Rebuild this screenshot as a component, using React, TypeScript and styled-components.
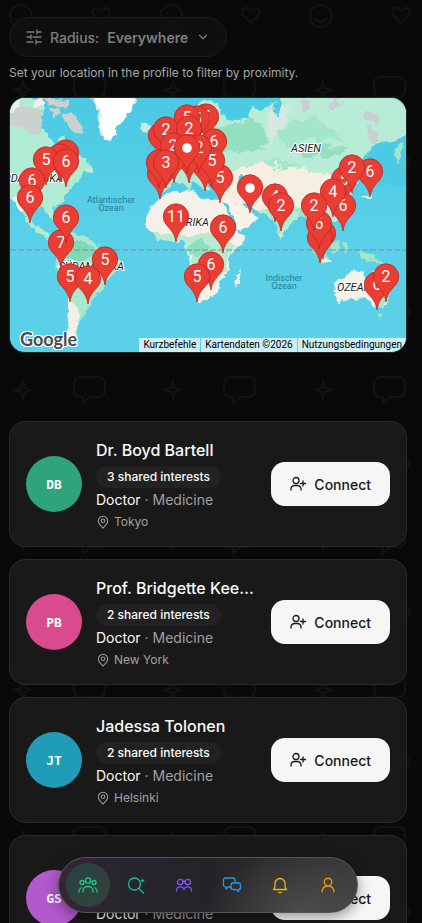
import React from 'react';
import styled, { createGlobalStyle } from 'styled-components';
import { ChevronDown, MapPin, UserRound } from 'lucide-react';

const GlobalStyle = createGlobalStyle`
  * { box-sizing: border-box; }
  body { margin: 0; background: #090909; }
  button { font: inherit; cursor: pointer; }
`;

const Page = styled.div`
  position: relative;
  height: 100vh;
  overflow: hidden;
  background: #090909;
  color: #fafafa;
  font-family: Inter, 'Liberation Sans', sans-serif;
`;

const Backdrop = styled.svg`
  position: absolute;
  inset: 0;
  width: 100%;
  height: 100%;
`;

const Content = styled.main`
  position: relative;
  padding: 17px 15px 0 9px;
`;

const RadiusButton = styled.button`
  display: flex;
  align-items: center;
  gap: 8px;
  height: 40px;
  padding: 0 16px;
  border: 1px solid #1c1c1c;
  border-radius: 20px;
  background: rgba(17, 17, 17, 0.8);
  color: #7f7f7f;
  font-size: 14px;
  font-weight: 500;
`;

const RadiusValue = styled.span`
  font-weight: 600;
`;

const Hint = styled.p`
  margin: 8px 0 16px;
  font-size: 12px;
  line-height: 16px;
  color: #a6a6a6;
`;

const MapFrame = styled.section`
  position: relative;
  overflow: hidden;
  aspect-ratio: 398 / 256;
  border: 1px solid #262626;
  border-radius: 16px;
  background: #5ad1e8;
`;

const MapDrawing = styled.svg`
  display: block;
  width: 100%;
  height: 100%;
`;

const MapLogo = styled.a`
  position: absolute;
  left: 10px;
  bottom: 1px;
  color: #4a4d50;
  font-family: Lato, sans-serif;
  font-size: 18px;
  line-height: 24px;
  font-weight: 700;
  text-decoration: none;
  text-shadow: 1px 0 #fff, -1px 0 #fff, 0 1px #fff, 0 -1px #fff, 1px 1px #fff, -1px -1px #fff, 1px -1px #fff, -1px 1px #fff;
`;

const MapLegal = styled.div`
  position: absolute;
  right: 0;
  bottom: 0;
  display: flex;
  gap: 1px;
  font-family: Roboto, sans-serif;
  font-size: 10px;
  line-height: 14px;
`;

const LegalLink = styled.a`
  padding: 0 4px;
  background: rgba(235, 245, 248, 0.8);
  color: #000;
  text-decoration: none;
`;

const People = styled.ul`
  display: flex;
  flex-direction: column;
  gap: 12px;
  margin: 68px 0 0;
  padding: 0;
  list-style: none;
`;

const Card = styled.li`
  display: flex;
  align-items: center;
  gap: 14px;
  padding: 16px;
  border: 1px solid #2a2a2a;
  border-radius: 16px;
  background: #191919;
`;

const Avatar = styled.div<{ $color: string }>`
  display: grid;
  place-items: center;
  flex: none;
  width: 56px;
  height: 56px;
  border-radius: 50%;
  background: ${(p) => p.$color};
  font-family: 'DejaVu Sans Mono', monospace;
  font-size: 13px;
  font-weight: 700;
`;

const Details = styled.div`
  display: flex;
  flex: 1;
  flex-direction: column;
  align-items: flex-start;
  min-width: 0;
`;

const Name = styled.h2`
  max-width: 100%;
  margin: 0 0 4px;
  overflow: hidden;
  font-size: 16px;
  line-height: 24px;
  font-weight: 500;
  text-overflow: ellipsis;
  white-space: nowrap;
`;

const Shared = styled.span`
  padding: 0 11px;
  border-radius: 11px;
  background: #222222;
  font-size: 12px;
  line-height: 22px;
  font-weight: 500;
`;

const Job = styled.p`
  margin: 2px 0 4px;
  color: #a1a1a1;
  font-size: 14px;
  line-height: 20px;
`;

const Role = styled.span`
  color: #fafafa;
`;

const Place = styled.p`
  display: flex;
  align-items: center;
  gap: 4px;
  margin: 0;
  color: #a1a1a1;
  font-size: 12px;
  line-height: 16px;
`;

const ConnectButton = styled.button`
  display: flex;
  align-items: center;
  gap: 8px;
  flex: none;
  height: 44px;
  padding: 0 19px;
  border: 0;
  border-radius: 14px;
  background: #f6f6f6;
  color: #171717;
  font-size: 14px;
  font-weight: 500;
`;

const NavDock = styled.div`
  position: fixed;
  right: 6px;
  bottom: 10px;
  left: 0;
  display: flex;
  justify-content: center;
`;

const NavBar = styled.nav`
  display: flex;
  gap: 4px;
  padding: 5px 7px;
  border: 1px solid #555558;
  border-radius: 28px;
  background:
    radial-gradient(ellipse 100px 60px at 82% 100%, rgba(100, 100, 102, 0.5), transparent),
    linear-gradient(90deg, #342637 0%, #29252d 20%, #242428 50%, #303033 75%, #3a3a3c 100%);
  box-shadow: 0 4px 14px rgba(0, 0, 0, 0.4);
`;

const NavButton = styled.button<{ $tone: string; $active?: boolean }>`
  display: grid;
  place-items: center;
  width: 44px;
  height: 44px;
  padding: 0;
  border: 0;
  border-radius: 50%;
  background: ${(p) => (p.$active ? 'linear-gradient(115deg, #28443e, #35403f)' : 'transparent')};
  color: ${(p) => p.$tone};
`;

const Stroke = styled.svg`
  display: block;
  fill: none;
  stroke: currentColor;
  stroke-width: 1.3;
  stroke-linecap: round;
  stroke-linejoin: round;
`;

const MapLabel = styled.text`
  fill: #1c1c1c;
  stroke: #fff;
  stroke-width: 2px;
  paint-order: stroke;
  font: italic 400 11px Roboto, sans-serif;
`;

const OceanLabel = styled.text`
  fill: #238097;
  font: 400 9px Roboto, sans-serif;
  text-anchor: middle;
`;

const PinLabel = styled.text`
  fill: #fff;
  font: 400 16px Roboto, sans-serif;
  text-anchor: middle;
`;

type PinData = [x: number, y: number, label: string];

const pins: PinData[] = [
  [66, 153, ''], [60, 157, ''], [46, 160, '5'], [66, 162, '6'], [32, 181, '6'], [30, 198, '6'],
  [61, 243, '7'], [66, 218, '6'], [105, 260, '5'], [70, 277, '5'], [88, 279, '4'],
  [206, 117, '5'], [197, 119, '5'], [187, 118, '5'], [161, 136, ''], [166, 130, '2'], [189, 129, '2'],
  [220, 178, '5'], [214, 142, '6'], [205, 166, ''], [212, 161, '5'], [189, 158, ''], [199, 148, '2'],
  [174, 158, ''], [173, 146, '2'], [160, 174, ''], [159, 163, ''], [166, 163, '3'], [187, 148, 'dot'],
  [176, 217, '11'], [223, 228, '6'], [211, 265, '6'], [197, 277, '5'],
  [250, 188, 'dot'], [275, 197, '4'], [281, 206, '2'],
  [344, 180, '5'], [370, 172, '6'], [352, 168, '2'], [343, 206, '6'], [333, 192, '4'],
  [323, 234, ''], [320, 238, ''], [319, 224, '6'], [314, 206, '2'],
  [377, 285, '6'], [386, 277, '2'],
];

function Pin({ x, y, label }: { x: number; y: number; label: string }) {
  return (
    <g transform={`translate(${x} ${y})`}>
      <path d="M0 25C-1 17-5 13-9 8.500A12.700 12.700 0 1 1 9 8.500C5 13 1 17 0 25Z" fill="#ea3d33" stroke="#b52a22" strokeWidth=".8" />
      {label === 'dot' ? <circle r="4.800" fill="#fff" /> : label && <PinLabel y="5">{label}</PinLabel>}
    </g>
  );
}

function WorldMap() {
  return (
    <MapDrawing viewBox="10 98 396 254" preserveAspectRatio="xMidYMid slice" role="img" aria-label="World map">
      <defs>
        <linearGradient id="sea" x1="0" y1="0" x2="0" y2="1">
          <stop offset="0" stopColor="#4cc9e3" />
          <stop offset=".6" stopColor="#5ad1e8" />
        </linearGradient>
        <filter id="coast" x="-5%" y="-5%" width="110%" height="110%" colorInterpolationFilters="sRGB">
          <feTurbulence type="fractalNoise" baseFrequency=".13" numOctaves="3" seed="4" />
          <feDisplacementMap in="SourceGraphic" scale="7" xChannelSelector="R" yChannelSelector="G" />
        </filter>
        <filter id="patches" x="-5%" y="-5%" width="110%" height="110%" colorInterpolationFilters="sRGB">
          <feTurbulence type="fractalNoise" baseFrequency=".09" numOctaves="4" seed="9" />
          <feDisplacementMap in="SourceGraphic" scale="18" xChannelSelector="R" yChannelSelector="G" />
        </filter>
        <clipPath id="asia">
          <path d="M150 180L165 150L175 125L190 108L212 102L225 117L232 122L246 118L253 106L263 110L273 104L282 98H410V132L390 143L376 142L370 151L362 158L366 172L358 178L352 194L346 208L336 221L324 224L312 228L300 214L289 225L281 238L270 219L262 211L245 209L230 200L217 185L200 181L176 184Z" />
        </clipPath>
      </defs>
      <rect x="10" y="98" width="396" height="254" fill="url(#sea)" />

      <g filter="url(#coast)">
        <path fill="#b0ebd3" d="M4 96H30L45 108L40 123L49 138L56 146L62 134L71 143L78 155L90 163L94 172L83 173L76 181L67 195L60 205L52 207L56 219L50 218L44 207L36 209L29 216L34 226L44 229L50 239L60 240L58 244L44 237L30 227L20 208L10 196L4 184Z" />
        <path fill="#cbd0d0" d="M10 104L28 106L42 112L43 128L36 136L29 134L22 126L10 125ZM44 98L70 100L67 108L50 105ZM62 113L72 113L80 122L83 134L75 133L68 124ZM50 109L57 107L60 113L54 118Z" />
        <path fill="#eef0ec" d="M10 98L22 98L18 108L10 113ZM32 99L43 98L43 106L34 107ZM12 196L23 193L28 203L22 213Z" />
        <path fill="#bdebd6" d="M85 166L94 169L92 173L86 171Z" />
        <path fill="#dcece5" d="M91 98H138L132 110L121 120L115 132L109 141L102 138L98 126L99 112Z" />
        <path fill="#fff" d="M94 96H138L135 106L126 115L118 126L110 142L104 138L100 125L101 110L96 104Z" />
        <path fill="#c5eddd" d="M140 125L148 123L152 127L147 133L141 131Z" />
        <path fill="#a8e8cd" d="M60 238L72 233L88 237L98 245L108 252L120 258L117 268L107 282L99 293L91 302L84 316L78 326L75 338L69 346L67 330L69 313L70 297L63 278L55 264L58 251Z" />
        <path fill="#80d9b5" d="M65 245L78 240L92 246L99 254L82 262L67 258Z" />
        <path fill="#f4f0e9" d="M68 297L75 304L80 316L75 334L69 343L68 325Z" />
        <path fill="#bcebd6" d="M192 131L188 118L200 102L211 100L219 111L226 125L220 140L190 148ZM156 142L165 143L164 157L155 158Z" />
        <path fill="#b5ead4" d="M162 178L174 169L180 155L200 149L220 155L234 177L220 188L206 184L213 196L202 194L195 183L188 179L198 191L193 193L181 181L172 185L164 192L155 188L158 178Z" />
        <path fill="#f5f1ea" d="M159 199L173 191L193 191L201 198L212 199L227 201L232 212L237 232L246 235L241 244L229 256L229 271L221 280L218 290L210 299L199 302L195 289L190 270L190 257L183 242L171 242L159 240L149 232L146 222L150 208Z" />
        <path fill="#b6ead1" d="M151 234L165 232L190 236L207 233L228 239L236 245L228 255L227 270L220 278L211 285L201 284L192 266L190 254L183 242L160 241Z" />
        <path fill="#8edfbd" d="M188 246L200 239L210 247L203 257L193 258Z" />
        <path fill="#f3efe5" d="M234 282L241 268L239 282L236 288Z" />
        <path fill="#f8f2e9" d="M218 196L229 194L244 200L249 211L258 217L249 226L239 231L230 219L224 209Z" />
      </g>

      <g filter="url(#coast)">
        <path fill="#b8ecd7" d="M205 112L216 104L224 118L237 121L247 118L252 106L261 112L273 104L282 96H412V133L390 143L376 142L369 152L361 159L365 171L359 179L351 195L345 209L336 221L325 224L311 227L300 214L289 226L281 239L273 220L259 211L244 208L228 197L214 185L203 176Z" />
      </g>
      <g clipPath="url(#asia)">
        <g filter="url(#patches)">
          <path fill="#92e0c0" d="M220 126L254 120L266 136L264 153L235 149L212 157L205 140ZM290 149L322 144L345 148L329 158L304 156Z" />
          <path fill="#a4e6ca" d="M275 127L315 118L340 130L344 143L310 138L286 148ZM265 157L302 165L280 172Z" />
          <path fill="#f6eee2" d="M228 172L260 162L286 168L323 170L346 177L340 200L315 208L293 207L278 198L257 213L226 202L218 188Z" />
          <path fill="#c8ced1" d="M302 98L311 101L306 116L300 110ZM328 99L344 101L337 110L324 108ZM367 110L381 118L377 126L364 117ZM371 129L382 137L375 145L366 137Z" />
          <path fill="#d8e7e1" d="M272 105L288 103L286 125L278 130L270 147L268 134Z" />
        </g>
      </g>
      <g filter="url(#coast)">
        <path fill="#4cc9e3" d="M194 182L202 190L217 193L219 197L198 195L190 187ZM215 179L226 176L232 181L221 184ZM238 178L243 174L248 184L249 192L243 190ZM243 203L251 205L255 214L249 211ZM222 201L227 204L237 228L232 224ZM274 106L279 96L282 104L278 118ZM388 143L412 133V185H376L366 162L376 146Z" />
        <path fill="#a3e5c9" d="M266 208L278 208L285 216L280 236L273 221ZM290 209L312 208L323 225L315 229L303 217ZM308 240L326 256L332 261L325 263L314 253ZM329 245L340 239L339 250L332 253ZM343 242L349 243L345 254ZM357 250L374 255L384 265L372 263L362 258ZM394 149L402 143L401 159L396 163Z" />
        <path fill="#e5efe2" d="M322 259L332 260L331 262L321 262ZM361 197L372 193L370 198Z" />
        <path fill="#f5f1eb" d="M334 282L347 276L355 269L363 272L365 280L374 270L380 280L388 289L390 300L382 309L374 306L366 298L350 299L337 303L335 292Z" />
        <path fill="#a8e7cc" d="M375 270L385 285L390 298L382 308L376 307L385 295L379 284ZM377 314L383 314L380 318Z" />
      </g>
      <path d="M10 250H406" stroke="#73949d" strokeWidth="1" strokeDasharray="6 2" />

      <MapLabel x="63" y="182" textAnchor="end">NORDAMERIKA</MapLabel>
      <MapLabel x="124" y="270" textAnchor="end">SÜDAMERIKA</MapLabel>
      <MapLabel x="209" y="226" textAnchor="end">AFRIKA</MapLabel>
      <MapLabel x="291" y="152">ASIEN</MapLabel>
      <MapLabel x="337" y="291">OZEANIEN</MapLabel>
      <OceanLabel x="111" y="203">Atlantischer</OceanLabel>
      <OceanLabel x="111" y="211">Ozean</OceanLabel>
      <OceanLabel x="284" y="281">Indischer</OceanLabel>
      <OceanLabel x="284" y="289">Ozean</OceanLabel>
      {pins.map(([x, y, label], i) => <Pin key={i} x={x} y={y} label={label} />)}
    </MapDrawing>
  );
}

function PatternBackdrop() {
  return (
    <Backdrop aria-hidden="true">
      <defs>
        <pattern id="doodles" width="150" height="150" patternUnits="userSpaceOnUse">
          <g fill="none" stroke="#121212" strokeWidth="2">
            <circle cx="21" cy="16" r="11" />
            <path d="M15 18Q21 26 27 18M17 12V14M25 12V14" />
            <path d="M101 23L94 16C89 10 96 4 101 11C106 4 113 10 108 16Z" />
            <path d="M23 82L25 88L31 90L25 92L23 98L21 92L15 90L21 88Z" />
            <path d="M82 77H98Q105 77 105 84V90Q105 97 98 97H90L83 103V97H81Q74 97 74 90V84Q74 77 82 77Z" />
          </g>
        </pattern>
      </defs>
      <rect width="100%" height="100%" fill="url(#doodles)" />
    </Backdrop>
  );
}

const SlidersIcon = () => (
  <Stroke width="16" height="16" viewBox="0 0 16 16" aria-hidden="true">
    <path d="M1 3H8M11 3H15M11 1V5M1 8H4M7 8H15M5 6V10M1 13H7M10 13H15M10 11V15" />
  </Stroke>
);

const ConnectIcon = () => (
  <Stroke width="16" height="16" viewBox="0 0 16 16" aria-hidden="true">
    <circle cx="6" cy="4.500" r="3" />
    <path d="M1 14V13A3.500 3.500 0 0 1 4.500 9.500H7.500A3.500 3.500 0 0 1 11 13V14M13 5V10M10.500 7.500H15.500" />
  </Stroke>
);

const GroupIcon = () => (
  <Stroke width="20" height="20" viewBox="0 0 20 20">
    <circle cx="10" cy="5.500" r="2.600" /><circle cx="4" cy="7.500" r="2" /><circle cx="16" cy="7.500" r="2" />
    <path d="M5 17V16A5 4.500 0 0 1 15 16V17M.8 17Q.8 14 3 12.800M19.200 17Q19.200 14 17 12.800" />
  </Stroke>
);

const DiscoverIcon = () => (
  <Stroke width="20" height="20" viewBox="0 0 20 20">
    <circle cx="8.500" cy="9" r="6" />
    <path d="M13 13.500L17.500 18" />
    <path d="M16.500 3L17.200 5L19 5.700L17.200 6.400L16.500 8L15.800 6.400L14 5.700L15.800 5Z" fill="currentColor" stroke="none" />
  </Stroke>
);

const FriendsIcon = () => (
  <Stroke width="20" height="20" viewBox="0 0 20 20">
    <circle cx="6.200" cy="7" r="2.700" /><circle cx="13.800" cy="7" r="2.700" />
    <path d="M2.500 16V15A3.700 3 0 0 1 10 15A3.700 3 0 0 1 17.500 15V16M9 7L10 6L11 7" />
  </Stroke>
);

const ChatIcon = () => (
  <Stroke width="20" height="20" viewBox="0 0 20 20">
    <path d="M9 12H6L4 14V12C2 12 1.500 11 1.500 10V5C1.500 3.500 2.500 3 3.500 3H11C12.500 3 13 4 13 5V7" />
    <path d="M11 8H16.500C18 8 18.500 8.800 18.500 10V12.500C18.500 14 17.500 14.500 16.500 14.500V16.500L14 14.500H11C9.500 14.500 9 13.500 9 12.500V10C9 8.800 9.800 8 11 8Z" />
  </Stroke>
);

const BellIcon = () => (
  <Stroke width="20" height="20" viewBox="0 0 20 20">
    <path d="M3.500 14.500H16.500C15.500 13.500 15 12.800 15 11V8.500A5 5 0 0 0 5 8.500V11C5 12.800 4.500 13.500 3.500 14.500ZM8.500 17.300H11.500" />
  </Stroke>
);

const people = [
  { name: 'Dr. Boyd Bartell', initials: 'DB', color: '#2fa37c', shared: 3, city: 'Tokyo' },
  { name: 'Prof. Bridgette Keeling', initials: 'PB', color: '#d94b8c', shared: 2, city: 'New York' },
  { name: 'Jadessa Tolonen', initials: 'JT', color: '#209cb8', shared: 2, city: 'Helsinki' },
  { name: 'Greta Solberg', initials: 'GS', color: '#b259cb', shared: 2, city: 'Oslo' },
];

const navItems = [
  { label: 'Community', tone: '#20c987', icon: <GroupIcon />, active: true },
  { label: 'Discover', tone: '#19b89a', icon: <DiscoverIcon /> },
  { label: 'Friends', tone: '#7c56ef', icon: <FriendsIcon /> },
  { label: 'Messages', tone: '#229bdc', icon: <ChatIcon /> },
  { label: 'Notifications', tone: '#efb50c', icon: <BellIcon /> },
  { label: 'Profile', tone: '#ef9510', icon: <UserRound size={18} strokeWidth={1.8} /> },
];

export default function App() {
  return (
    <Page>
      <GlobalStyle />
      <PatternBackdrop />
      <Content>
        <RadiusButton type="button" aria-haspopup="listbox">
          <SlidersIcon />
          <span>Radius:</span>
          <RadiusValue>Everywhere</RadiusValue>
          <ChevronDown size={14} strokeWidth={2} />
        </RadiusButton>
        <Hint>Set your location in the profile to filter by proximity.</Hint>
        <MapFrame aria-label="Map">
          <WorldMap />
          <MapLogo href="#google">Google</MapLogo>
          <MapLegal>
            <LegalLink href="#shortcuts">Kurzbefehle</LegalLink>
            <LegalLink href="#data">Kartendaten ©2026</LegalLink>
            <LegalLink href="#terms">Nutzungsbedingungen</LegalLink>
          </MapLegal>
        </MapFrame>
        <People>
          {people.map((p) => (
            <Card key={p.initials}>
              <Avatar $color={p.color}>{p.initials}</Avatar>
              <Details>
                <Name>{p.name}</Name>
                <Shared>{p.shared} shared interests</Shared>
                <Job><Role>Doctor</Role> · Medicine</Job>
                <Place><MapPin size={14} strokeWidth={1.8} />{p.city}</Place>
              </Details>
              <ConnectButton type="button"><ConnectIcon />Connect</ConnectButton>
            </Card>
          ))}
        </People>
      </Content>
      <NavDock>
        <NavBar aria-label="Main">
          {navItems.map((n) => (
            <NavButton key={n.label} type="button" aria-label={n.label} $tone={n.tone} $active={n.active}>{n.icon}</NavButton>
          ))}
        </NavBar>
      </NavDock>
    </Page>
  );
}
